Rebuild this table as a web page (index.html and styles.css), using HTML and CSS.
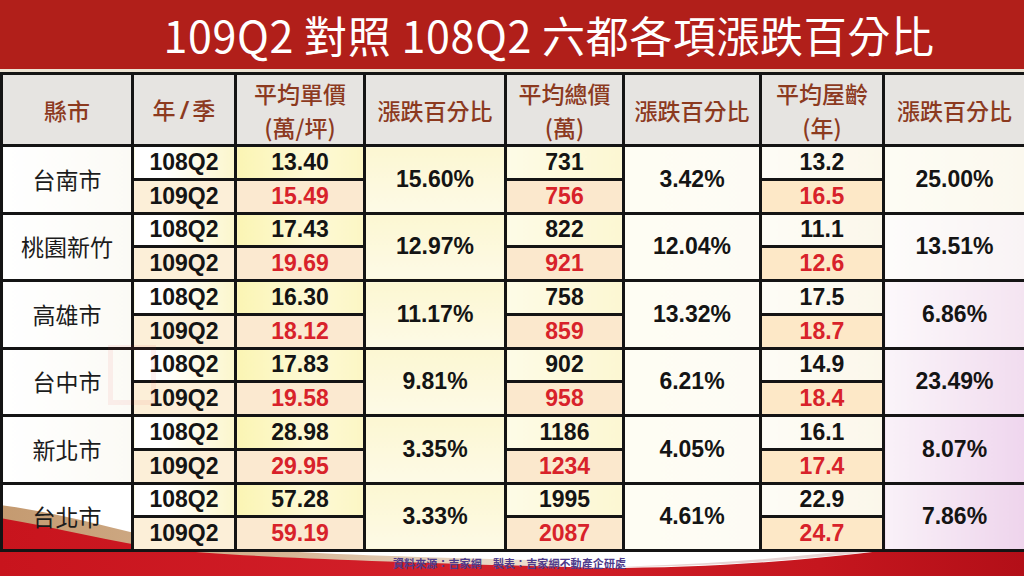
FILE: index.html
```html
<!DOCTYPE html>
<html lang="zh-Hant">
<head>
<meta charset="utf-8">
<title>109Q2 對照 108Q2 六都各項漲跌百分比</title>
<link rel="stylesheet" href="styles.css">
</head>
<body>
<div class="slide">
  <svg class="deco" width="1024" height="110" viewBox="0 466 1024 110" aria-hidden="true">
    <defs>
      <linearGradient id="tan" x1="0" y1="0" x2="1" y2="0">
        <stop offset="0" stop-color="#c49a70"/>
        <stop offset="0.5" stop-color="#d5b594"/>
        <stop offset="1" stop-color="#efe2d6"/>
      </linearGradient>
      <linearGradient id="red" x1="0" y1="0" x2="1" y2="0">
        <stop offset="0" stop-color="#c8141d"/>
        <stop offset="0.45" stop-color="#d3202a"/>
        <stop offset="0.8" stop-color="#c5161e"/>
        <stop offset="1" stop-color="#b30f18"/>
      </linearGradient>
    </defs>
    <path d="M0,505 C60,513 110,528 170,541 C260,553 380,556 560,561 L560,576 L0,576 Z" fill="url(#tan)"/>
    <path d="M640,566 C780,561 900,548 1024,522 L1024,532 C880,553 760,566 620,567 Z" fill="#e6d4d4"/>
    <path d="M0,518 C60,528 110,542 170,550 C260,558 420,563 600,568 C760,568 880,553 1024,531 L1024,576 L0,576 Z" fill="url(#red)"/>
  </svg>

  <header class="title">109Q2 對照 108Q2 六都各項漲跌百分比</header>
  <div class="sep"></div>

  <table class="grid">
    <colgroup>
      <col class="w1"><col class="w2"><col class="w3"><col class="w4">
      <col class="w5"><col class="w6"><col class="w7"><col class="w8">
    </colgroup>
    <thead>
      <tr>
        <th>縣市</th>
        <th>年 <span class="slash">/</span> 季</th>
        <th>平均單價<br>(萬/坪)</th>
        <th>漲跌百分比</th>
        <th>平均總價<br>(萬)</th>
        <th>漲跌百分比</th>
        <th>平均屋齡<br>(年)</th>
        <th>漲跌百分比</th>
      </tr>
    </thead>
    <tbody>
      <tr>
        <td rowspan="2" class="city">台南市</td>
        <td class="q1">108Q2</td><td class="u1">13.40</td>
        <td rowspan="2" class="p1">15.60%</td>
        <td class="t1">731</td>
        <td rowspan="2" class="p2">3.42%</td>
        <td class="a1">13.2</td>
        <td rowspan="2" class="p3 r1">25.00%</td>
      </tr>
      <tr>
        <td class="q2">109Q2</td><td class="u2 red">15.49</td>
        <td class="t2 red">756</td><td class="a2 red">16.5</td>
      </tr>

      <tr>
        <td rowspan="2" class="city">桃園新竹</td>
        <td class="q1">108Q2</td><td class="u1">17.43</td>
        <td rowspan="2" class="p1">12.97%</td>
        <td class="t1">822</td>
        <td rowspan="2" class="p2">12.04%</td>
        <td class="a1">11.1</td>
        <td rowspan="2" class="p3 r2">13.51%</td>
      </tr>
      <tr>
        <td class="q2">109Q2</td><td class="u2 red">19.69</td>
        <td class="t2 red">921</td><td class="a2 red">12.6</td>
      </tr>

      <tr>
        <td rowspan="2" class="city">高雄市</td>
        <td class="q1">108Q2</td><td class="u1">16.30</td>
        <td rowspan="2" class="p1">11.17%</td>
        <td class="t1">758</td>
        <td rowspan="2" class="p2">13.32%</td>
        <td class="a1">17.5</td>
        <td rowspan="2" class="p3 r3">6.86%</td>
      </tr>
      <tr>
        <td class="q2">109Q2</td><td class="u2 red">18.12</td>
        <td class="t2 red">859</td><td class="a2 red">18.7</td>
      </tr>

      <tr>
        <td rowspan="2" class="city">台中市</td>
        <td class="q1">108Q2</td><td class="u1">17.83</td>
        <td rowspan="2" class="p1">9.81%</td>
        <td class="t1">902</td>
        <td rowspan="2" class="p2">6.21%</td>
        <td class="a1">14.9</td>
        <td rowspan="2" class="p3 r4">23.49%</td>
      </tr>
      <tr>
        <td class="q2">109Q2</td><td class="u2 red">19.58</td>
        <td class="t2 red">958</td><td class="a2 red">18.4</td>
      </tr>

      <tr>
        <td rowspan="2" class="city">新北市</td>
        <td class="q1">108Q2</td><td class="u1">28.98</td>
        <td rowspan="2" class="p1">3.35%</td>
        <td class="t1">1186</td>
        <td rowspan="2" class="p2">4.05%</td>
        <td class="a1">16.1</td>
        <td rowspan="2" class="p3 r5">8.07%</td>
      </tr>
      <tr>
        <td class="q2">109Q2</td><td class="u2 red">29.95</td>
        <td class="t2 red">1234</td><td class="a2 red">17.4</td>
      </tr>

      <tr>
        <td rowspan="2" class="city city-last">台北市</td>
        <td class="q1">108Q2</td><td class="u1">57.28</td>
        <td rowspan="2" class="p1">3.33%</td>
        <td class="t1">1995</td>
        <td rowspan="2" class="p2">4.61%</td>
        <td class="a1">22.9</td>
        <td rowspan="2" class="p3 r6">7.86%</td>
      </tr>
      <tr>
        <td class="q2">109Q2</td><td class="u2 red">59.19</td>
        <td class="t2 red">2087</td><td class="a2 red">24.7</td>
      </tr>
    </tbody>
  </table>

  <footer class="source">資料來源：吉家網　製表：吉家網不動產企研處</footer>

  <div class="wm-logo" aria-hidden="true"></div>
</div>
</body>
</html>
```

FILE: styles.css
```css
html, body {
  margin: 0;
  padding: 0;
  background: #ffffff;
}

.slide {
  position: relative;
  width: 1024px;
  height: 576px;
  overflow: hidden;
  background: #ffffff;
}

.deco {
  position: absolute;
  left: 0;
  bottom: 0;
  z-index: 0;
}

.title {
  position: relative;
  z-index: 1;
  height: 69px;
  background: #b11f1a;
  color: #ffffff;
  font-family: "Noto Sans CJK TC", "Noto Sans", sans-serif;
  font-size: 43px;
  font-weight: 400;
  line-height: 69px;
  padding-left: 74px;
  text-align: center;
  letter-spacing: 0.6px;
  white-space: nowrap;
}

.sep {
  position: relative;
  z-index: 1;
  height: 3px;
  background: #ece3d3;
}

.grid {
  position: relative;
  z-index: 1;
  width: 1024px;
  table-layout: fixed;
  border-collapse: collapse;
  margin: 0;
}

.w1 { width: 131px; }
.w2 { width: 103px; }
.w3 { width: 129px; }
.w4 { width: 141px; }
.w5 { width: 118px; }
.w6 { width: 137px; }
.w7 { width: 123px; }
.w8 { width: 142px; }

.grid th,
.grid td {
  border: 3px solid #141414;
  padding: 0;
  text-align: center;
  vertical-align: middle;
}

.grid thead tr { height: 72px; }
.grid tbody tr { height: 33.75px; }

.grid th {
  background: #e6e4e1;
  color: #8c3a1f;
  font-family: "Noto Sans CJK TC", sans-serif;
  font-size: 23px;
  font-weight: 500;
  line-height: 34px;
}

.slash {
  font-family: "Liberation Sans", sans-serif;
  font-weight: 700;
  font-style: italic;
}

.grid td {
  font-family: "Liberation Sans", Arial, sans-serif;
  font-weight: 700;
  font-size: 23px;
  line-height: 1;
  color: #141414;
}

.grid td.city {
  font-family: "Noto Sans CJK TC", sans-serif;
  font-weight: 400;
  font-size: 23px;
  color: #1c1c1c;
  background: linear-gradient(to right, #ffffff, #fbfaf5);
}

.grid td.city-last {
  background: transparent;
}

.red { color: #d8222a !important; }

.q1 { background: linear-gradient(to right, #ffffff 30%, #fbf6cc); }
.q2 { background: #fcefd8; }
.u1 { background: linear-gradient(to right, #fbf5b4, #fdf9d6 60%, #fcf6c4); }
.u2 { background: #fbe9d0; }
.p1 { background: linear-gradient(to bottom, #fcf7d2, #fdfae6); }
.t1 { background: linear-gradient(to right, #fdfbe6, #fcf7d2); }
.t2 { background: #fbe8cd; }
.p2 { background: linear-gradient(to right, #fefdf3, #fdfbf4); }
.a1 { background: linear-gradient(to right, #fdfcf6, #fbf7ea); }
.a2 { background: #fde8c7; }
.r1 { background: linear-gradient(to right, #fdfcf4, #fbf8ee); }
.r2 { background: linear-gradient(to right, #fdfcfa, #f9f3f5); }
.r3 { background: linear-gradient(to right, #fcf8fb, #f4e4f1); }
.r4 { background: linear-gradient(to right, #faf4f9, #f1dcef); }
.r5 { background: linear-gradient(to right, #f9f1f8, #efd6ee); }
.r6 { background: linear-gradient(to right, #f9f1f8, #eed4ec); }

.source {
  position: relative;
  z-index: 1;
  height: 24px;
  padding-left: 393px;
  font-family: "Noto Sans CJK TC", sans-serif;
  font-size: 11px;
  font-weight: 700;
  line-height: 22px;
  color: #4e3b8c;
  letter-spacing: 0.1px;
}

.wm-logo {
  position: absolute;
  left: 108px;
  top: 345px;
  width: 48px;
  height: 60px;
  border: 5px solid rgba(220, 60, 60, 0.07);
  box-sizing: border-box;
  z-index: 2;
  pointer-events: none;
}
```
